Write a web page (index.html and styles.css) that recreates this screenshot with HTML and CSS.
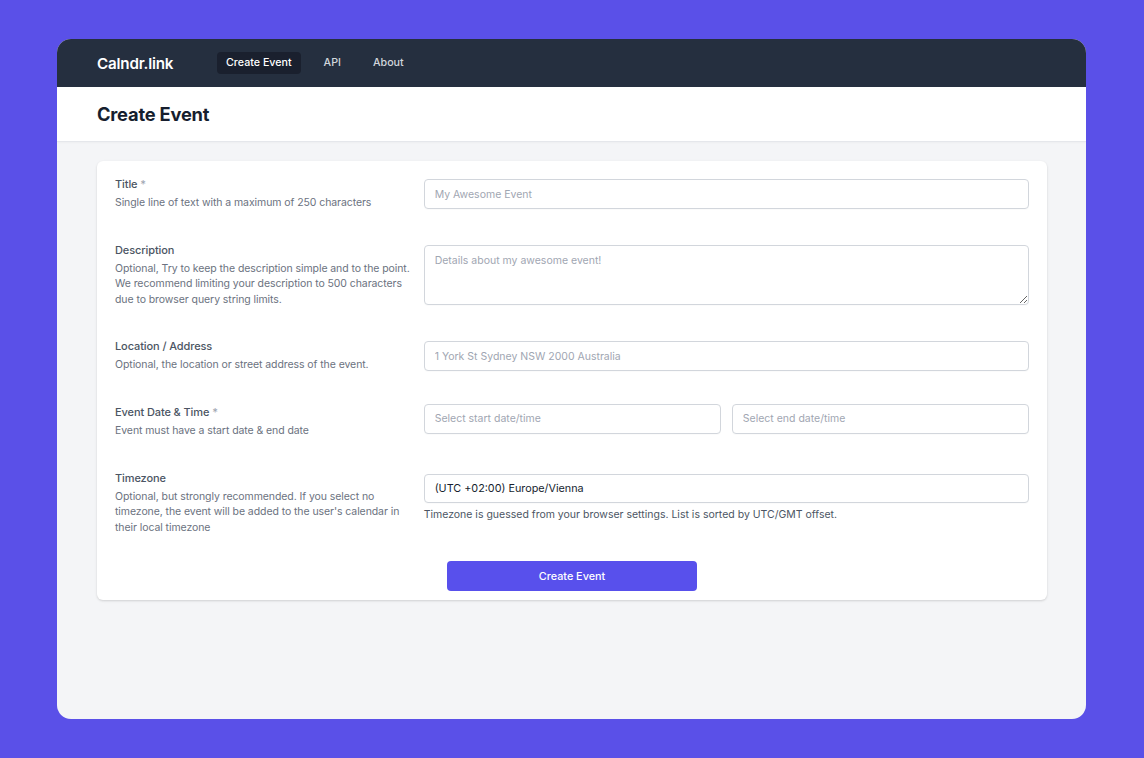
FILE: index.html
```html
<!DOCTYPE html>
<html lang="en">
<head>
  <meta charset="UTF-8">
  <title>Calndr.link - Create Event</title>
  <link rel="stylesheet" href="styles.css">
</head>
<body>
  <div class="window">
    <!-- Top navigation -->
    <nav class="navbar">
      <div class="brand">Calndr.link</div>
      <div class="nav-links">
        <a class="nav-link active" href="#">Create Event</a>
        <a class="nav-link" href="#">API</a>
        <a class="nav-link" href="#">About</a>
      </div>
    </nav>

    <header class="page-header">
      <h1>Create Event</h1>
    </header>

    <main class="page-main">
      <form class="card">
        <div class="row">
          <div class="row-info">
            <label for="title">Title <span class="req">*</span></label>
            <p>Single line of text with a maximum of 250 characters</p>
          </div>
          <div class="row-field">
            <input id="title" type="text" placeholder="My Awesome Event">
          </div>
        </div>

        <div class="row">
          <div class="row-info">
            <label for="desc">Description</label>
            <p>Optional, Try to keep the description simple and to the point. We recommend limiting your description to 500 characters due to browser query string limits.</p>
          </div>
          <div class="row-field">
            <textarea id="desc" placeholder="Details about my awesome event!"></textarea>
          </div>
        </div>

        <div class="row">
          <div class="row-info">
            <label for="loc">Location / Address</label>
            <p>Optional, the location or street address of the event.</p>
          </div>
          <div class="row-field">
            <input id="loc" type="text" placeholder="1 York St Sydney NSW 2000 Australia">
          </div>
        </div>

        <div class="row">
          <div class="row-info">
            <label for="start">Event Date &amp; Time <span class="req">*</span></label>
            <p>Event must have a start date &amp; end date</p>
          </div>
          <div class="row-field split">
            <input id="start" type="text" placeholder="Select start date/time">
            <input id="end" type="text" placeholder="Select end date/time">
          </div>
        </div>

        <div class="row">
          <div class="row-info">
            <label for="tz">Timezone</label>
            <p>Optional, but strongly recommended. If you select no timezone, the event will be added to the user's calendar in their local timezone</p>
          </div>
          <div class="row-field">
            <div class="select" id="tz">(UTC +02:00) Europe/Vienna</div>
            <p class="help">Timezone is guessed from your browser settings. List is sorted by UTC/GMT offset.</p>
          </div>
        </div>

        <div class="actions">
          <button type="button">Create Event</button>
        </div>
      </form>
    </main>
  </div>
</body>
</html>
```

FILE: styles.css
```css
:root {
  --indigo: #5850ec;
  --nav-bg: #252f3f;
  --nav-active: #1a202e;
  --page-bg: #f4f5f7;
  --border: #d2d6dc;
  --text: #161e2e;
  --label: #4b5563;
  --muted: #6b7280;
  --placeholder: #9fa6b2;
}
* { box-sizing: border-box; margin: 0; padding: 0; }
body {
  font-family: Inter, "Noto Sans", sans-serif;
  background: #5a50e8;
  padding: 39px 58px 39px 57px;
}
.window {
  width: 1029px; height: 680px;
  border-radius: 14px; overflow: hidden;
  background: var(--page-bg);
  display: flex; flex-direction: column;
}
.navbar {
  height: 48px; background: var(--nav-bg);
  display: flex; align-items: center;
  padding: 0 40px;
}
.brand {
  color: #fff; font-size: 15.2px; font-weight: 600;
  letter-spacing: -0.2px; width: 120px;
}
.nav-links { display: flex; gap: 14px; }
.nav-link {
  color: #d2d6dc; text-decoration: none;
  font-size: 10.7px; font-weight: 500;
  padding: 5px 9px; border-radius: 4px;
  line-height: 12px;
}
.nav-link.active { background: var(--nav-active); color: #fff; }
.page-header {
  background: #fff; height: 55px;
  border-bottom: 1px solid #e5e7eb;
  display: flex; align-items: center;
  padding: 0 40px;
  box-shadow: 0 1px 2px rgba(0,0,0,0.03);
}
.page-header h1 {
  font-size: 18.3px; font-weight: 700; color: var(--text);
  letter-spacing: -0.2px;
}
.page-main { padding: 19px 39px 0 40px; }
.card {
  background: #fff; border-radius: 6px;
  box-shadow: 0 1px 3px rgba(0,0,0,0.1), 0 1px 2px rgba(0,0,0,0.06);
  padding: 15px 18px 9px;
  display: flex; flex-direction: column; gap: 31px;
}
.row {
  display: grid; grid-template-columns: repeat(3, 1fr); column-gap: 12px;
  align-items: start;
}
.row-field { grid-column: span 2; padding-top: 3px; }
.row-info label {
  display: block; font-size: 11px; font-weight: 500;
  color: var(--label); line-height: 16px; letter-spacing: -0.1px;
}
.row-info .req { color: #9fa6b2; }
.row-info p {
  font-size: 10.5px; color: var(--muted); line-height: 15.6px;
  margin-top: 3px; letter-spacing: -0.08px;
}
.row-field.split { display: flex; gap: 11px; padding-top: 0; }
.row-field input,
.row-field textarea,
.select {
  width: 100%; height: 30px;
  border: 1px solid var(--border); border-radius: 4px;
  font-family: inherit; font-size: 10.5px; color: var(--text);
  padding: 0 10px; background: #fff;
  box-shadow: 0 1px 1px rgba(0,0,0,0.02);
}
.row-field textarea {
  height: 60px; padding: 7px 10px; resize: vertical;
  display: block; line-height: 16px;
}
.row-field input::placeholder,
.row-field textarea::placeholder { color: var(--placeholder); }
.select {
  display: flex; align-items: center;
  margin-top: 1px; height: 29px; font-size: 10.8px;
}
.help {
  font-size: 10.5px; color: var(--label); line-height: 16px;
  margin-top: 4px;
}
.actions {
  display: flex; justify-content: center;
  margin-top: -5px;
}
.actions button {
  width: 250px; height: 30px;
  background: var(--indigo); color: #fff; border: none;
  border-radius: 4px; font-family: inherit;
  font-size: 10.8px; font-weight: 500; cursor: pointer;
}
```
